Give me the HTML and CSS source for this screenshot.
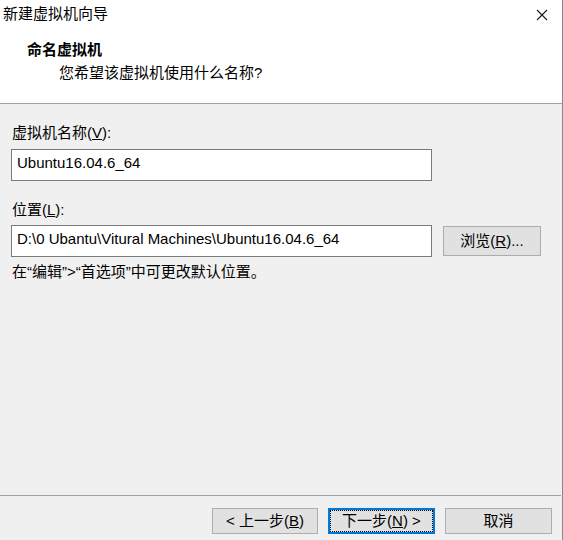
FILE: index.html
```html
<!DOCTYPE html>
<html lang="zh-CN">
<head>
<meta charset="utf-8">
<title>新建虚拟机向导</title>
<link rel="stylesheet" href="styles.css">
</head>
<body>
<div class="window">
  <div class="titlebar">
    <span class="title">新建虚拟机向导</span>
    <svg class="close" width="12" height="12" viewBox="0 0 12 12"><path d="M1 1 L11 11 M11 1 L1 11" stroke="#1a1a1a" stroke-width="1.1" fill="none"/></svg>
  </div>
  <div class="header">
    <div class="h-title">命名虚拟机</div>
    <div class="h-sub">您希望该虚拟机使用什么名称?</div>
  </div>
  <div class="body">
    <div class="label lbl-first">虚拟机名称(<u>V</u>):</div>
    <div class="field field-short">Ubuntu16.04.6_64</div>
    <div class="label lbl-second">位置(<u>L</u>):</div>
    <div class="row">
      <div class="field">D:\0 Ubantu\Vitural Machines\Ubuntu16.04.6_64</div>
      <button class="btn browse">浏览(<u>R</u>)...</button>
    </div>
    <div class="note">在“编辑”&gt;“首选项”中可更改默认位置。</div>
  </div>
  <div class="footer">
    <button class="btn fbtn">&lt; 上一步(<u>B</u>)</button>
    <button class="btn fbtn default">下一步(<u>N</u>) &gt;</button>
    <button class="btn fbtn cancel">取消</button>
  </div>
</div>
</body>
</html>
```

FILE: styles.css
```css
* { box-sizing: border-box; }
html, body { margin: 0; padding: 0; }
body {
  width: 563px;
  height: 540px;
  overflow: hidden;
  font-family: "Liberation Sans", "Noto Sans CJK SC", sans-serif;
  font-size: 15px;
  color: #000;
  background: #f0f0f0;
}
.window {
  width: 563px;
  height: 540px;
  display: flex;
  flex-direction: column;
  border-right: 1px solid #8a8a8a;
  background: #f0f0f0;
}
.titlebar {
  height: 30px;
  background: #fff;
  display: flex;
  align-items: center;
  justify-content: space-between;
  padding: 0 14px 2px 3px;
}
.title { line-height: 20px; }
.close { display: block; margin-top: 2px; }
.header {
  background: #fff;
  height: 74px;
  border-bottom: 1px solid #a0a0a0;
  padding-top: 10px;
}
.h-title {
  font-weight: bold;
  line-height: 20px;
  padding-left: 27px;
}
.h-sub {
  line-height: 20px;
  padding-left: 59px;
  margin-top: 3px;
}
.body {
  flex: 1;
  padding: 0 11px;
}
.label { line-height: 20px; padding-left: 1px; }
.lbl-first { margin-top: 19px; }
.lbl-second { margin-top: 19px; }
.field {
  width: 421px;
  height: 32px;
  background: #fff;
  border: 1px solid #7a7a7a;
  padding: 0 5px;
  line-height: 26px;
  white-space: nowrap;
}
.field-short { margin-top: 6px; }
.row {
  display: flex;
  align-items: flex-start;
  margin-top: 5px;
}
.btn {
  font-family: inherit;
  font-size: 15px;
  color: #000;
  background: #e1e1e1;
  border: 1px solid #adadad;
  padding: 0;
  margin: 0;
  line-height: 20px;
}
.browse {
  width: 98px;
  height: 30px;
  margin-left: 11px;
  margin-top: 1px;
}
.note {
  line-height: 20px;
  margin-top: 5px;
  padding-left: 1px;
}
.footer {
  height: 45px;
  border-top: 1px solid #a0a0a0;
  margin-right: 1px;
  display: flex;
  justify-content: flex-end;
  align-items: flex-start;
  gap: 10px;
  padding: 12px 9px 0 0;
}
.fbtn {
  width: 106px;
  height: 26px;
}
.default {
  width: 107px;
  border: 2px solid #0078d7;
  outline: 1px dotted #000;
  outline-offset: -3px;
}
.cancel { width: 107px; }
```
